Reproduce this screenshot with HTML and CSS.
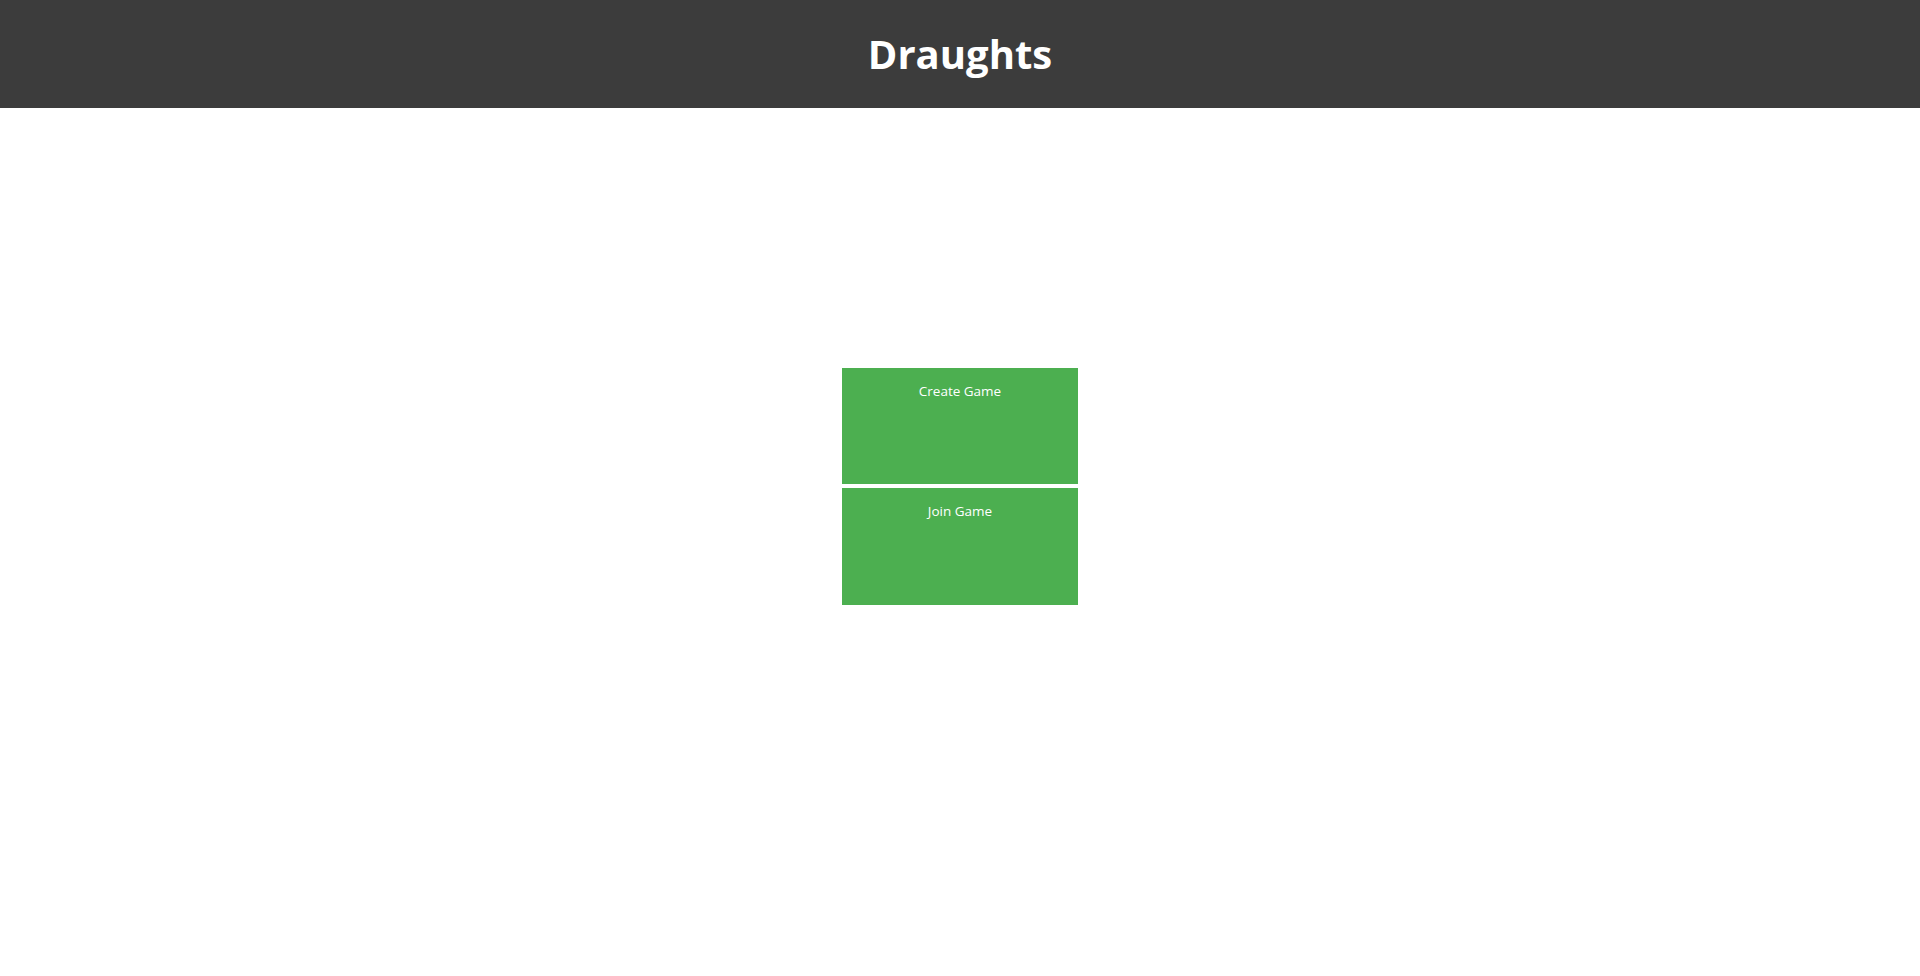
FILE: index.html
```html
<!DOCTYPE html>
<html>
<head>
<meta charset="utf-8">
<link rel="stylesheet" href="styles.css">
</head>
<body>
<header class="top-bar"><h1 class="title">Draughts</h1></header>
<main class="menu">
  <button class="menu-btn">Create Game</button>
  <button class="menu-btn menu-btn-2">Join Game</button>
</main>
</body>
</html>
```
FILE: styles.css
```css
html, body { margin: 0; padding: 0; background: #fff; }
body { font-family: "Open Sans", "Noto Sans", sans-serif; }
.top-bar {
  height: 108px;
  background: #3c3c3c;
  display: flex;
  align-items: center;
  justify-content: center;
}
.title {
  margin: 0;
  color: #fff;
  font-size: 40px;
  font-weight: 700;
  letter-spacing: 0;
  line-height: 1;
}
.menu {
  display: flex;
  flex-direction: column;
  align-items: center;
  gap: 4px;
  padding-top: 260px;
}
.menu-btn {
  width: 236px;
  height: 116px;
  border: none;
  background: #4caf50;
  color: #fff;
  font-family: "Open Sans", "Noto Sans", sans-serif;
  font-size: 13.5px;
  display: flex;
  justify-content: center;
  align-items: flex-start;
  padding: 14px 0 0;
  margin: 0;
}
.menu-btn-2 { height: 117px; }
```
